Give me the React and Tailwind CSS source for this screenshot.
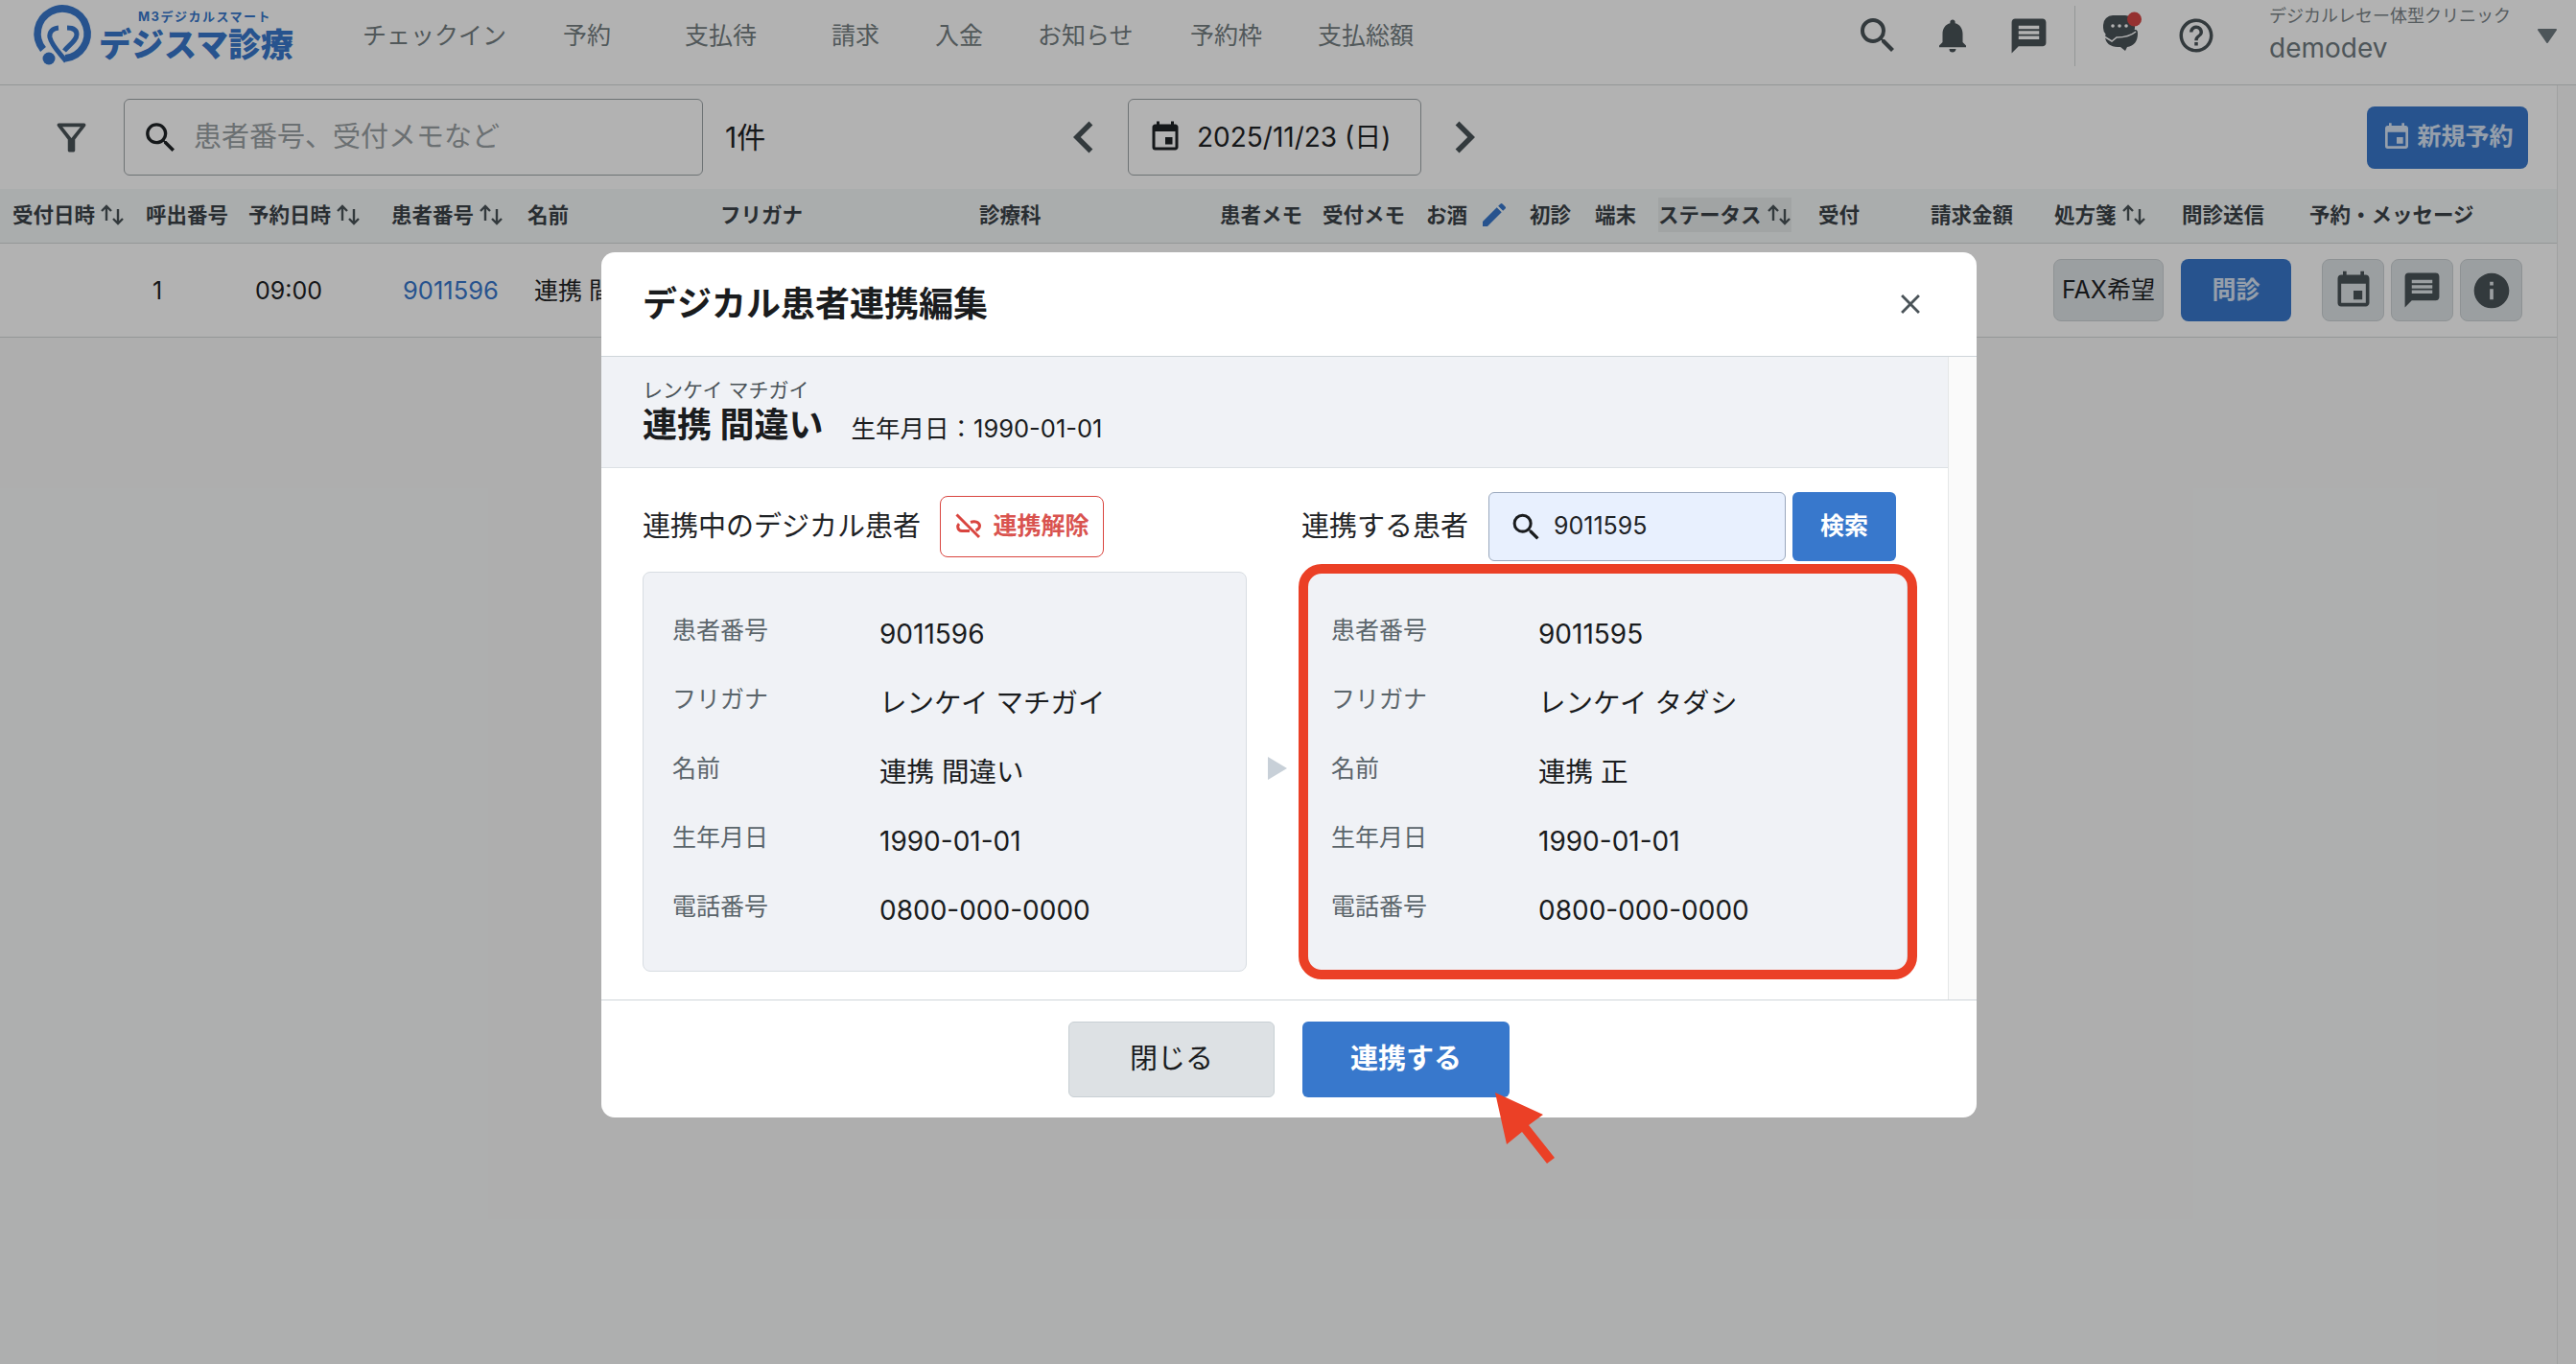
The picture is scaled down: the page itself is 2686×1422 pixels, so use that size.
import React from "react";
import {
  MdSearch, MdNotifications, MdMessage, MdHelpOutline, MdOutlineFilterAlt, MdEvent,
  MdChevronLeft, MdChevronRight, MdEdit, MdInfo, MdClose,
} from "react-icons/md";

function Sort({ className = "" }) {
  return (
    <svg width="26" height="24" viewBox="0 0 26 24" fill="none" stroke="#4a5358" strokeWidth="2.4" className={"shrink-0 " + className}>
      <path d="M7 18V3M2 8l5-5 5 5" />
      <path d="M19 6v15M14 16l5 5 5-5" />
    </svg>
  );
}

function Logo() {
  return (
    <svg width="80" height="75" viewBox="0 0 80 75" fill="none" stroke="#3878cc" className="shrink-0">
      <path d="M15 51.5A26 26 0 1 1 38.3 60.8" strokeWidth="7.5" />
      <path d="M39 64C33 56 24 48 22 39C21 33 25 29.5 31 29" strokeWidth="5" />
      <path d="M37 53C42 47 50 42 50 36C50 31 46 29 40 29" strokeWidth="5" />
      <circle cx="21" cy="61" r="6.5" fill="#3878cc" stroke="none" />
    </svg>
  );
}

function ChatIcon() {
  return (
    <svg width="70" height="60" viewBox="0 0 70 60" className="ml-[17px] shrink-0">
      <path d="M14 31C14 38 20 42 27 42H30L35 46L37 42C44 41 48 36 48 28C48 25 47 24 46 24H16Z" fill="#4a5358" />
      <rect x="12" y="9" width="33" height="23" rx="10" fill="#4a5358" />
      <path d="M13 31L21 36L26 32C33 32 40 31 46 26" fill="none" stroke="#ffffff" strokeWidth="1.6" />
      <circle cx="22" cy="20" r="1.8" fill="#ffffff" />
      <circle cx="29" cy="20" r="1.8" fill="#ffffff" />
      <circle cx="36" cy="20" r="1.8" fill="#ffffff" />
      <circle cx="44.5" cy="13" r="7.5" fill="#d64745" />
    </svg>
  );
}

function LinkOff() {
  return (
    <svg width="30" height="30" viewBox="0 0 30 30" fill="none" stroke="#d9453f" strokeWidth="3" className="shrink-0">
      <path d="M2.5 2.5L26 26" />
      <path d="M5 12C3 14 3 19 8 19.5H16" />
      <path d="M17 10.5C21 9 26 10 26.5 14C26.5 16 25 18 22.5 19" />
    </svg>
  );
}

const headers = [
  { w: "w-[139px]", t: "受付日時", s: true },
  { w: "w-[107px]", t: "呼出番号" },
  { w: "w-[149px]", t: "予約日時", s: true },
  { w: "w-[142px]", t: "患者番号", s: true },
  { w: "w-[201px]", t: "名前" },
  { w: "w-[270px]", t: "フリガナ" },
  { w: "w-[251px]", t: "診療科" },
  { w: "w-[107px]", t: "患者メモ" },
  { w: "w-[108px]", t: "受付メモ" },
  { w: "w-[108px]", t: "お酒", e: true },
  { w: "w-[68px]", t: "初診" },
  { w: "w-[66px]", t: "端末" },
  { w: "w-[167px]", t: "ステータス", s: true, h: true },
  { w: "w-[117px]", t: "受付" },
  { w: "w-[129px]", t: "請求金額" },
  { w: "w-[133px]", t: "処方箋", s: true },
  { w: "w-[133px]", t: "問診送信" },
  { w: "w-[240px]", t: "予約・メッセージ" },
];

const nav = [
  { w: "w-[209px]", t: "チェックイン" },
  { w: "w-[127px]", t: "予約" },
  { w: "w-[153px]", t: "支払待" },
  { w: "w-[108px]", t: "請求" },
  { w: "w-[107px]", t: "入金" },
  { w: "w-[159px]", t: "お知らせ" },
  { w: "w-[133px]", t: "予約枠" },
  { w: "w-[110px]", t: "支払総額" },
];

function PatientCard({ rows, children }) {
  return (
    <div className="relative h-[417px] rounded-[8px] border border-[#d8dde2] bg-[#f0f2f6] pt-[28px] pl-[30px]">
      {rows.map(([k, v, size]) => (
        <div key={k} className="flex h-[72px] items-center">
          <div className="w-[216px] pb-[6px] text-[25px] text-[#5b656b]">{k}</div>
          <div className={size + " text-[#1a1c1e]"}>{v}</div>
        </div>
      ))}
      {children}
    </div>
  );
}

export default function App() {
  return (
    <div className="relative flex h-[1422px] w-full flex-col overflow-hidden bg-[#f9fafa] font-[Inter,'Noto_Sans_CJK_JP',sans-serif] text-[#1f2326]">
      <header className="flex h-[89px] shrink-0 items-start border-b border-[#d5d9d9] bg-white">
        <div className="flex w-[378px] shrink-0 items-start pl-[30px]">
          <Logo />
          <div className="-ml-[7px] flex flex-col pt-[9px] text-[#3878cc]">
            <div className="ml-[41px] text-[13px] leading-[16px] font-bold tracking-[1.5px]">M3デジカルスマート</div>
            <div className="mt-[3px] text-[34px] leading-[38px] font-black">デジスマ診療</div>
          </div>
        </div>
        <nav className="flex h-[76px] items-center text-[25px] text-[#747e82]">
          {nav.map((n) => (
            <div key={n.t} className={n.w + " shrink-0"}>{n.t}</div>
          ))}
        </nav>
        <div className="ml-auto flex h-[74px] items-center pr-[19px] text-[#4a5358]">
          <MdSearch size={48} className="shrink-0" />
          <MdNotifications size={42} className="ml-[33px] shrink-0" />
          <MdMessage size={43} className="ml-[37px] shrink-0" />
          <div className="ml-[26px] h-[63px] w-px bg-[#d5d9d9]" />
          <ChatIcon />
          <MdHelpOutline size={42} className="ml-[18px] shrink-0" />
          <div className="ml-[55px] w-[248px] whitespace-nowrap">
            <div className="text-[18px] leading-[24px] text-[#7b8589]">デジカルレセー体型クリニック</div>
            <div className="mt-[2px] text-[28px] leading-[38px] text-[#6f7a80]">demodev</div>
          </div>
          <svg width="22" height="16" viewBox="0 0 22 16" className="ml-[31px] shrink-0">
            <path d="M2 2H20L11 15Z" fill="#6f7a80" stroke="#6f7a80" strokeWidth="2" strokeLinejoin="round" />
          </svg>
        </div>
      </header>

      <div className="flex min-h-0 flex-1">
        <main className="min-w-0 flex-1">
          <div className="flex h-[108px] items-center bg-white">
            <MdOutlineFilterAlt size={45} className="ml-[52px] shrink-0 text-[#4a5358]" />
            <div className="ml-[32px] flex h-[80px] w-[604px] shrink-0 items-center rounded-[6px] border border-[#9ea5a8] pl-[17px]">
              <MdSearch size={41} className="shrink-0 text-[#1f2326]" />
              <span className="ml-[14px] text-[29px] text-[#9aa1a4]">患者番号、受付メモなど</span>
            </div>
            <div className="ml-[23px] w-[341px] shrink-0 text-[30px]">1件</div>
            <MdChevronLeft size={66} className="shrink-0 text-[#4a5358]" />
            <div className="ml-[13px] flex h-[80px] w-[306px] shrink-0 items-center rounded-[6px] border border-[#9ea5a8] pl-[20px]">
              <MdEvent size={36} className="shrink-0" />
              <span className="ml-[15px] text-[28px]">2025/11/23 (日)</span>
            </div>
            <MdChevronRight size={66} className="ml-[12px] shrink-0 text-[#4a5358]" />
            <button className="mr-[30px] ml-auto flex h-[65px] w-[168px] shrink-0 items-center justify-center rounded-[8px] bg-[#3878cc] text-[25px] font-bold text-[#ffffff]/80">
              <MdEvent size={32} className="mr-[5px] shrink-0" />
              新規予約
            </button>
          </div>

          <div className="flex h-[57px] items-center border-b border-[#d5d9d9] bg-[#f4f8f8] pb-[2px] pl-[13px] text-[21.5px] font-bold whitespace-nowrap text-[#3c4348]">
            {headers.map((h) => (
              <div key={h.t} className={h.w + " flex shrink-0 items-center"}>
                <span className={h.h ? "flex h-[36px] w-[139px] items-center bg-[#e7ebeb]" : "flex items-center"}>
                  {h.t}
                  {h.s && <Sort className="ml-[5px]" />}
                </span>
                {h.e && <MdEdit size={32} className="ml-[12px] shrink-0 text-[#3878cc]" />}
              </div>
            ))}
          </div>

          <div className="flex h-[98px] items-center border-b border-[#d5d9d9] bg-white pr-[36px] text-[25px]">
            <div className="w-[159px] shrink-0" />
            <div className="w-[107px] shrink-0 pt-[2px]">1</div>
            <div className="w-[154px] shrink-0 pt-[2px]">09:00</div>
            <div className="w-[137px] shrink-0 pt-[2px] text-[25.5px] text-[#3878cc]">9011596</div>
            <div className="shrink-0 pt-[2px]">連携 間違い</div>
            <div className="ml-auto flex h-[65px] items-stretch text-[25px]">
              <button className="w-[115px] rounded-[8px] border border-[#ccd2d5] bg-[#dfe4e7]">FAX希望</button>
              <button className="ml-[18px] w-[115px] rounded-[8px] bg-[#3878cc] font-bold text-[#ffffff]/80">問診</button>
              <button className="ml-[32px] flex w-[65px] items-center justify-center rounded-[8px] border border-[#ccd2d5] bg-[#dfe4e7] text-[#4a5358]"><MdEvent size={44} /></button>
              <button className="ml-[7px] flex w-[65px] items-center justify-center rounded-[8px] border border-[#ccd2d5] bg-[#dfe4e7] text-[#4a5358]"><MdMessage size={43} /></button>
              <button className="ml-[7px] flex w-[65px] items-center justify-center rounded-[8px] border border-[#ccd2d5] bg-[#dfe4e7] text-[#4a5358]"><MdInfo size={44} /></button>
            </div>
          </div>
        </main>
        <div className="w-[20px] shrink-0 border-l border-[#e5e7e7] bg-[#fafafa]" />
      </div>

      <div className="absolute inset-0 bg-black/30" />

      <div className="absolute top-[263px] left-[627px] flex h-[902px] w-[1434px] flex-col overflow-hidden rounded-[14px] bg-white">
        <div className="flex h-[109px] shrink-0 items-center justify-between border-b border-[#cfd5da] pr-[52px] pl-[43px]">
          <h2 className="text-[36px] font-bold text-[#1a1c1e]">デジカル患者連携編集</h2>
          <MdClose size={34} className="text-[#4a5358]" />
        </div>

        <div className="flex min-h-0 flex-1">
          <div className="min-w-0 flex-1">
            <div className="h-[116px] border-b border-[#dde1e5] bg-[#f0f2f6] pt-[21px] pl-[43px]">
              <div className="text-[21px] leading-[28px] text-[#4a5358]">レンケイ マチガイ</div>
              <div className="flex items-baseline leading-[44px]">
                <span className="text-[36px] font-bold text-[#1a1c1e]">連携 間違い</span>
                <span className="ml-[29px] text-[25.5px] text-[#1a1c1e]">生年月日：1990-01-01</span>
              </div>
            </div>

            <div className="flex pt-[25px] pl-[43px]">
              <div className="w-[630px] shrink-0">
                <div className="flex h-[72px] items-center">
                  <span className="w-[310px] shrink-0 text-[29px]">連携中のデジカル患者</span>
                  <button className="flex h-[64px] w-[171px] items-center justify-center rounded-[8px] border border-[#d9453f] text-[25px] font-bold text-[#d9534f]">
                    <LinkOff />
                    <span className="ml-[10px]">連携解除</span>
                  </button>
                </div>
                <div className="mt-[11px]">
                  <PatientCard
                    rows={[
                      ["患者番号", "9011596", "text-[28px]"],
                      ["フリガナ", "レンケイ マチガイ", "text-[28.5px]"],
                      ["名前", "連携 間違い", "text-[28.5px]"],
                      ["生年月日", "1990-01-01", "text-[28px]"],
                      ["電話番号", "0800-000-0000", "text-[28px]"],
                    ]}
                  />
                </div>
              </div>

              <div className="flex w-[57px] shrink-0 justify-center pt-[276px] pl-[6px]">
                <svg width="20" height="24" viewBox="0 0 20 24"><path d="M0 0L20 12L0 24Z" fill="#c8d0d8" /></svg>
              </div>

              <div className="w-[632px] shrink-0">
                <div className="flex h-[72px] items-stretch">
                  <span className="flex w-[195px] shrink-0 items-center text-[29px] whitespace-nowrap">連携する患者</span>
                  <div className="flex w-[310px] shrink-0 items-center rounded-[6px] border border-[#9aa8bd] bg-[#e8f0fe] pl-[20px]">
                    <MdSearch size={37} className="shrink-0 text-[#1a1c1e]" />
                    <span className="ml-[10px] text-[25px]">9011595</span>
                  </div>
                  <button className="ml-[7px] w-[108px] shrink-0 rounded-[6px] bg-[#3878cc] text-[25px] font-bold text-white">検索</button>
                </div>
                <div className="mt-[11px]">
                  <PatientCard
                    rows={[
                      ["患者番号", "9011595", "text-[28px]"],
                      ["フリガナ", "レンケイ タダシ", "text-[28.5px]"],
                      ["名前", "連携 正", "text-[28.5px]"],
                      ["生年月日", "1990-01-01", "text-[28px]"],
                      ["電話番号", "0800-000-0000", "text-[28px]"],
                    ]}
                  >
                    <div className="absolute -top-[9px] -right-[11px] -bottom-[9px] -left-[4px] rounded-[24px] border-[10px] border-[#eb4026]" />
                  </PatientCard>
                </div>
              </div>
            </div>
          </div>
          <div className="w-[30px] shrink-0 border-l border-[#e5e7e7] bg-[#fafafa]" />
        </div>

        <div className="flex h-[123px] shrink-0 items-center justify-center gap-[29px] border-t border-[#cfd5da]">
          <button className="h-[79px] w-[215px] rounded-[6px] border border-[#c8d0d4] bg-[#dde1e4] text-[29px] text-[#1a1c1e]">閉じる</button>
          <button className="h-[79px] w-[216px] rounded-[6px] bg-[#3878cc] text-[29px] font-bold text-white">連携する</button>
        </div>
      </div>

      <svg width="70" height="80" viewBox="0 0 70 80" className="absolute top-[1139px] left-[1558px]">
        <path d="M1 0L51 23L36 34L63 68L55 74L29 41L13 54Z" fill="#eb4026" />
      </svg>
    </div>
  );
}
